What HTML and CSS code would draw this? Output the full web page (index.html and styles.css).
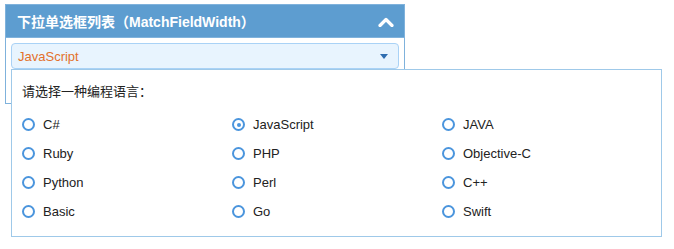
FILE: index.html
```html
<!DOCTYPE html>
<html lang="zh">
<head>
  <meta charset="UTF-8">
  <title>下拉单选框列表</title>
  <link rel="stylesheet" href="styles.css">
</head>
<body>

  <div class="panel">
    <!-- Header -->
    <div class="panel-header">
      <span class="panel-title">下拉单选框列表（MatchFieldWidth）</span>
      <svg class="collapse-icon" width="16" height="10" viewBox="0 0 16 10">
        <polyline points="2,8.5 8,2.5 14,8.5" fill="none" stroke="#fff" stroke-width="3.2" stroke-linecap="round" stroke-linejoin="round"/>
      </svg>
    </div>

    <!-- Body -->
    <div class="panel-body">
      <div class="dropdown">
        <span class="dropdown-value">JavaScript</span>
        <span class="dropdown-arrow"></span>
      </div>

      <!-- Popup list -->
      <div class="dropdown-popup">
        <div class="popup-title">请选择一种编程语言：</div>
        <div class="radio-grid">
          <div class="radio-item"><span class="radio"></span>C#</div>
          <div class="radio-item"><span class="radio checked"></span>JavaScript</div>
          <div class="radio-item"><span class="radio"></span>JAVA</div>
          <div class="radio-item"><span class="radio"></span>Ruby</div>
          <div class="radio-item"><span class="radio"></span>PHP</div>
          <div class="radio-item"><span class="radio"></span>Objective-C</div>
          <div class="radio-item"><span class="radio"></span>Python</div>
          <div class="radio-item"><span class="radio"></span>Perl</div>
          <div class="radio-item"><span class="radio"></span>C++</div>
          <div class="radio-item"><span class="radio"></span>Basic</div>
          <div class="radio-item"><span class="radio"></span>Go</div>
          <div class="radio-item"><span class="radio"></span>Swift</div>
        </div>
      </div>
    </div>
  </div>

</body>
</html>
```

FILE: styles.css
```css
* {
  margin: 0;
  padding: 0;
  box-sizing: border-box;
}

html,
body {
  min-height: 100%;
}

body {
  font-family: 'Liberation Sans', Arial, 'Noto Sans CJK SC', sans-serif;
  font-size: 13px;
  color: #333;
  background-color: #fff;
  min-height: 249px;
  padding: 4px 0 0 5px;
}

/* Panel */
.panel {
  width: 400px;
  border: 1px solid #7fb2dc;
}

.panel-header {
  display: flex;
  justify-content: space-between;
  align-items: center;
  height: 33px;
  padding: 0 10px 0 11px;
  background-color: #5d9dd0;
  border-bottom: 1px solid #7fb2dc;
}

.panel-title {
  color: #fff;
  font-size: 14px;
  font-weight: bold;
}

.collapse-icon {
  display: block;
  margin-top: 1px;
}

.panel-body {
  position: relative;
  padding: 5px 5px 34px;
}

/* Dropdown field */
.dropdown {
  display: flex;
  justify-content: space-between;
  align-items: center;
  height: 26px;
  padding: 0 10px 0 6px;
  background-color: #e8f4fe;
  border: 1px solid #a9d2f6;
  border-radius: 4px;
}

.dropdown-value {
  color: #e3712b;
  font-size: 13px;
}

.dropdown-arrow {
  width: 0;
  height: 0;
  border-left: 4px solid transparent;
  border-right: 4px solid transparent;
  border-top: 5px solid #2f6db0;
  margin-top: 1px;
}

/* Popup list */
.dropdown-popup {
  position: absolute;
  top: 31px;
  left: 5px;
  width: 651px;
  padding: 12px 10px 10px;
  background-color: #fff;
  border: 1px solid #9fc9e9;
}

.popup-title {
  line-height: 20px;
  font-size: 13px;
  color: #222;
}

.radio-grid {
  display: grid;
  grid-template-columns: repeat(3, 210px);
  margin-top: 8px;
}

.radio-item {
  display: flex;
  align-items: center;
  height: 29px;
  color: #222;
}

.radio {
  position: relative;
  width: 13px;
  height: 13px;
  margin-right: 8px;
  border: 2px solid #4b95dd;
  border-radius: 50%;
}

.radio.checked::after {
  content: "";
  position: absolute;
  top: 2.5px;
  left: 2.5px;
  width: 4px;
  height: 4px;
  border-radius: 50%;
  background-color: #4b95dd;
}
```
